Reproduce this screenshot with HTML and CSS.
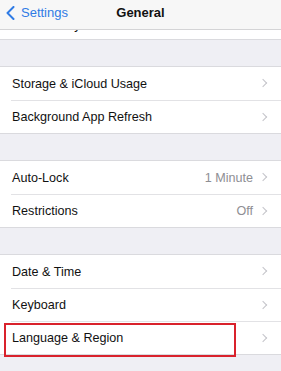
FILE: index.html
```html
<!DOCTYPE html>
<html>
<head>
<meta charset="utf-8">
<link rel="stylesheet" href="styles.css">
</head>
<body>
<div class="screen">
  <header class="nav">
    <a class="back">
      <svg class="back-icon" width="9" height="14" viewBox="0 0 9 14"><polyline points="7.5,1 1.5,7 7.5,13" fill="none" stroke="#2f7be5" stroke-width="2" stroke-linecap="round" stroke-linejoin="round"/></svg>
      <span>Settings</span>
    </a>
    <h1 class="title">General</h1>
  </header>
  <main class="list">
    <section class="group first">
      <div class="row"><span class="label">Accessibility</span><span class="chev"></span></div>
    </section>
    <section class="group">
      <div class="row"><span class="label">Storage &amp; iCloud Usage</span><span class="chev"></span></div>
      <div class="row"><span class="label">Background App Refresh</span><span class="chev"></span></div>
    </section>
    <section class="group">
      <div class="row"><span class="label">Auto-Lock</span><span class="value">1 Minute</span><span class="chev"></span></div>
      <div class="row"><span class="label">Restrictions</span><span class="value">Off</span><span class="chev"></span></div>
    </section>
    <section class="group">
      <div class="row"><span class="label">Date &amp; Time</span><span class="chev"></span></div>
      <div class="row"><span class="label">Keyboard</span><span class="chev"></span></div>
      <div class="row highlight"><span class="label">Language &amp; Region</span><span class="chev"></span></div>
    </section>
  </main>
</div>
</body>
</html>
```
FILE: styles.css
```css
* { box-sizing: border-box; }
html, body { margin: 0; padding: 0; }
body {
  background: #efeff4;
  font-family: "Liberation Sans", Arial, sans-serif;
  color: #111;
  width: 281px;
  height: 371px;
  overflow: hidden;
}
.screen { position: relative; height: 371px; overflow: hidden; }
.nav {
  position: absolute;
  top: 0; left: 0; right: 0;
  height: 30px;
  background: #f7f7f7;
  border-bottom: 1px solid #d4d4d6;
  display: flex;
  align-items: center;
  z-index: 2;
}
.back {
  position: absolute;
  left: 6px;
  top: 5px;
  display: flex;
  align-items: center;
  gap: 6px;
  color: #2f7be5;
  font-size: 13px;
  line-height: 16px;
}
.back-icon { display: block; }
.title {
  margin: 0 auto;
  font-size: 13px;
  font-weight: bold;
  line-height: 16px;
  padding-bottom: 3px;
  color: #111;
}
.list { padding-top: 6px; }
.group {
  background: #fff;
  border-top: 1px solid #dadade;
  border-bottom: 1px solid #dadade;
  margin-top: 26px;
}
.group.first { margin-top: 0; border-top: none; }
.group.first .row { padding-top: 4px; }
.row {
  position: relative;
  height: 33px;
  margin-left: 11px;
  padding-left: 1px;
  padding-right: 13px;
  display: flex;
  align-items: center;
  font-size: 12.6px;
}
.row + .row { border-top: 1px solid #e2e2e5; height: 33px; }
.label { flex: 1; }
.value { color: #8e8e93; margin-right: 10px; }
.chev {
  width: 5px;
  height: 9px;
  position: relative;
}
.chev::before {
  content: "";
  position: absolute;
  left: -3px;
  top: 1px;
  width: 5px;
  height: 5px;
  border-top: 1.3px solid #c4c4c9;
  border-right: 1.3px solid #c4c4c9;
  transform: rotate(45deg);
}
.highlight::after {
  content: "";
  position: absolute;
  left: -7px;
  top: 1px;
  width: 228px;
  height: 30px;
  border: 2px solid #d9222c;
}
```
